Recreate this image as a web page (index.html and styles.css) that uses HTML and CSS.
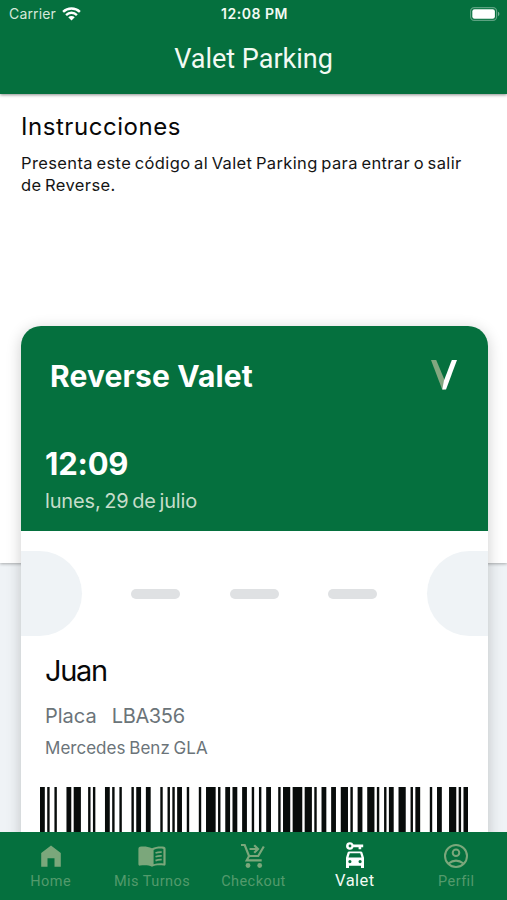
FILE: index.html
```html
<!DOCTYPE html>
<html lang="es">
<head>
<meta charset="utf-8">
<title>Valet Parking</title>
<link rel="stylesheet" href="styles.css">
</head>
<body>
<header class="topbar">
  <div class="status">
    <div class="carrier"><span class="carrier-name">Carrier</span>
      <svg class="wifi" viewBox="0 0 20 15"><path d="M1 5.2a13 13 0 0 1 18 0M4.2 8.6a8.3 8.3 0 0 1 11.6 0" fill="none" stroke="currentColor" stroke-width="2.6"/><path d="M10 14.5 6.5 11a5 5 0 0 1 7 0z" fill="currentColor"/></svg>
    </div>
    <span class="clock">12:08 PM</span>
    <svg class="battery" viewBox="0 0 30 14"><rect x=".6" y=".6" width="26" height="12.8" rx="3.6" fill="none" stroke="#fff" stroke-opacity=".35" stroke-width="1.2"/><rect x="2.3" y="2.3" width="22.6" height="9.4" rx="2.2" fill="#fff"/><path d="M28 4.8a2.4 2.4 0 0 1 0 4.4z" fill="#fff" fill-opacity=".45"/></svg>
  </div>
  <h1 class="title"><span>Valet Parking</span></h1>
</header>
<main class="content">
  <section class="intro">
    <h2 class="intro-title">Instrucciones</h2>
    <p class="intro-text">Presenta este código al Valet Parking para entrar o salir<br>de Reverse.</p>
  </section>
  <article class="pass">
    <div class="pass-head">
      <div class="brand"><h3 class="brand-name">Reverse Valet</h3>
        <svg class="brand-mark" viewBox="0 0 26 30"><path d="M0 0h5.2L14.400 22l-1 7.500h-2.200z" fill="#83a780"/><path d="M20.800 0H26L15 29.500h-3.700L13 20.500z" fill="#fff"/></svg>
      </div>
      <div class="time">12:09</div>
      <div class="date">lunes, 29 de julio</div>
    </div>
    <div class="tear"><i class="notch left"></i><i class="dash"></i><i class="dash"></i><i class="dash"></i><i class="notch right"></i></div>
    <div class="details">
      <div class="name">Juan</div>
      <div class="plate"><span>Placa</span><span class="plate-no">LBA356</span></div>
      <div class="car">Mercedes Benz GLA</div>
    </div>
    <svg class="barcode" viewBox="0 0 178 100" preserveAspectRatio="none"><path id="bars" fill="#080c0b"/></svg>
  </article>
</main>
<nav class="tabs">
  <a class="tab"><svg viewBox="0 0 24 24"><path d="M12 1.4 2.2 9v13.8h6.3v-8.6h7v8.6h6.3V9z" fill="currentColor"/></svg><span>Home</span></a>
  <a class="tab"><svg class="book" viewBox="0 0 28 24"><path d="M14 4.200C10 2.200 4.500 2.100 1.800 2.800Q.4 3.200.4 4.700v15.500q0 1.700 1.800 1.400c4.400-.7 8.400-.5 11.800 1.100 3.400-1.600 7.400-1.800 11.800-1.100q1.800.3 1.800-1.400V4.700q0-1.500-1.400-1.900C23.500 2.100 18 2.200 14 4.200zm1.600 1.700c2.700-1.300 6.700-1.600 9.800-1v14.500c-3.300-.5-6.700-.3-9.800.9z" fill="currentColor" fill-rule="evenodd"/><path d="M17.500 9q3-1.200 6.200-.9M17.500 12.800q3-1.200 6.200-.9M17.500 16.600q3-1.200 6.200-.9" fill="none" stroke="currentColor" stroke-width="1.700"/></svg><span>Mis Turnos</span></a>
  <a class="tab"><svg class="cart" viewBox="0 0 24 26"><g fill="none" stroke="currentColor" stroke-width="2.200"><path d="M0 2h3.700L8 13h9.200l5.600-9.500"/><path d="m8.100 13-2.400 4.300h15M8.500 6h8M13.200 2.200 17 6l-3.800 3.800"/></g><circle cx="7" cy="22.500" r="2.400" fill="currentColor"/><circle cx="18.700" cy="22.500" r="2.400" fill="currentColor"/></svg><span>Checkout</span></a>
  <a class="tab active"><svg class="valet" viewBox="0 0 18 26"><path d="M4 .2a3.800 3.800 0 1 0 3.500 5h5.100v2h2.600v-2h2V2.600H7.500A3.800 3.800 0 0 0 4 .2zm0 2.400a1.400 1.400 0 1 1 0 2.800 1.400 1.400 0 0 1 0-2.800zM3.200 9.500h11.600q1.200 0 1.600 1.100L18 15.800V26h-3v-2.200H3V26H0V15.800l1.600-5.200q.4-1.100 1.600-1.100zm.6 1.700-1.300 4.300h13l-1.300-4.300zM3.900 18a1.600 1.600 0 1 0 0 3.200 1.600 1.600 0 0 0 0-3.200zm10.200 0a1.600 1.600 0 1 0 0 3.200 1.600 1.600 0 0 0 0-3.200z" fill="currentColor" fill-rule="evenodd"/></svg><span>Valet</span></a>
  <a class="tab"><svg class="user" viewBox="0 0 24 24"><g fill="none" stroke="currentColor" stroke-width="2"><circle cx="12" cy="12" r="11"/><circle cx="12" cy="8.700" r="3.300"/><path d="M4.500 19.500q7.500-5.800 15 0"/></g></svg><span>Perfil</span></a>
</nav>
<script src="barcode.js"></script>
</body>
</html>
```
FILE: styles.css
```css
* { box-sizing: border-box; }
body { margin: 0; height: 900px; display: flex; flex-direction: column; overflow: hidden; background: #eff3f6; font-family: Inter, "Noto Sans", sans-serif; }
h1, h2, h3, p { margin: 0; font-weight: 400; }
.topbar { height: 94px; flex: none; background: #05703e; color: #f2faf3; box-shadow: 0 1px 3px rgba(0,0,0,.45); position: relative; }
.status { height: 27px; display: grid; grid-template-columns: 1fr auto 1fr; align-items: center; padding: 0 7px 0 9px; }
.carrier { display: flex; align-items: center; gap: 6px; font-size: 14px; color: #d5e8da; }
.carrier-name { letter-spacing: .15px; }
.wifi { width: 19px; height: 14px; color: #fff; }
.clock { font-size: 14px; font-weight: 600; letter-spacing: .5px; }
.battery { width: 30px; height: 14px; justify-self: end; }
.title { font: 400 27px/34px Roboto, sans-serif; text-align: center; margin-top: 15px; }
.content { flex: 1; min-height: 0; overflow: hidden; }
.intro { height: 469px; padding: 18px 20px 0 21px; background: #fff; box-shadow: 0 1px 3px rgba(0,0,0,.3); color: #151515; }
.intro-title { font-size: 24px; line-height: 30px; letter-spacing: .55px; color: #080808; white-space: nowrap; }
.intro-text { font-size: 16.5px; line-height: 22px; margin-top: 10px; letter-spacing: .37px; word-spacing: -1.4px; white-space: nowrap; }
.pass { width: 467px; height: 640px; margin: -237px 0 0 20.5px; position: relative; background: #fff; border-radius: 20px; overflow: hidden; box-shadow: 0 3px 15px rgba(0,0,0,.2); }
.pass-head { height: 205px; background: #05703e; padding: 31px 31px 0 24.5px; color: #fff; }
.brand { display: flex; justify-content: space-between; align-items: center; padding-left: 5px; height: 38px; white-space: nowrap; }
.brand-name { font-size: 30px; font-weight: 700; letter-spacing: .15px; }
.brand-mark { width: 26px; height: 30px; margin-top: -2px; }
.time { margin-top: 51px; font-size: 31px; line-height: 36px; font-weight: 700; letter-spacing: -.2px; }
.date { margin-top: 6px; font-size: 20px; line-height: 26px; letter-spacing: -.15px; word-spacing: -1.8px; color: #c5ddca; }
.tear { height: 85px; margin-top: 20px; display: flex; align-items: center; justify-content: space-between; }
.notch { width: 61px; height: 85px; background: #eff3f6; }
.left { border-radius: 0 43px 43px 0; }
.right { border-radius: 43px 0 0 43px; }
.dash { width: 49px; height: 10px; border-radius: 5px; background: #dfe1e3; }
.details { padding: 16px 24.5px 0; color: #6b7479; white-space: nowrap; }
.name { font-size: 29px; line-height: 38px; letter-spacing: -1.3px; color: #080808; }
.plate { display: flex; gap: 15px; font-size: 20px; line-height: 26px; margin-top: 13px; }
.plate-no { letter-spacing: -.35px; }
.car { font-size: 17px; line-height: 24px; margin-top: 7px; letter-spacing: .02px; word-spacing: -1px; }
.barcode { display: block; width: 428.3px; height: 100px; margin: 27px 0 0 19.5px; }
.tabs { flex: none; height: 68px; display: grid; grid-template-columns: repeat(5, 1fr); background: #05703e; position: relative; }
.tab { display: flex; flex-direction: column; align-items: center; color: #7ba77b; padding-top: 12px; font-family: Roboto, sans-serif; font-size: 14.5px; letter-spacing: .45px; white-space: nowrap; }
.tab svg { width: 24px; height: 24px; }
.tab span { color: #539a6c; line-height: 18px; margin-top: 5px; }
.tab .book { width: 28px; }
.tab .cart { height: 26px; margin-top: -1px; margin-bottom: -1px; }
.tab .valet { width: 18px; height: 26px; margin-top: -2px; }
.tab.active { color: #fff; font-size: 16.5px; letter-spacing: .5px; }
.tab.active span { color: #f2faf3; margin-top: 4px; }
```
FILE: barcode.js
```js
// Alternating bar and gap widths, one Code 128 symbol per group.
const symbols = "211214 213311 142112 141122 241211 112214 124112 212222 121223 113141 311222 223112 223112 112232 112412 2331112";
let x = 0;
let d = "";
[...symbols.replace(/ /g, "")].forEach((w, i) => {
  if (i % 2 === 0) d += `M${x} 0h${w}v100h-${w}z`;
  x += Number(w);
});
document.getElementById("bars").setAttribute("d", d);
```
